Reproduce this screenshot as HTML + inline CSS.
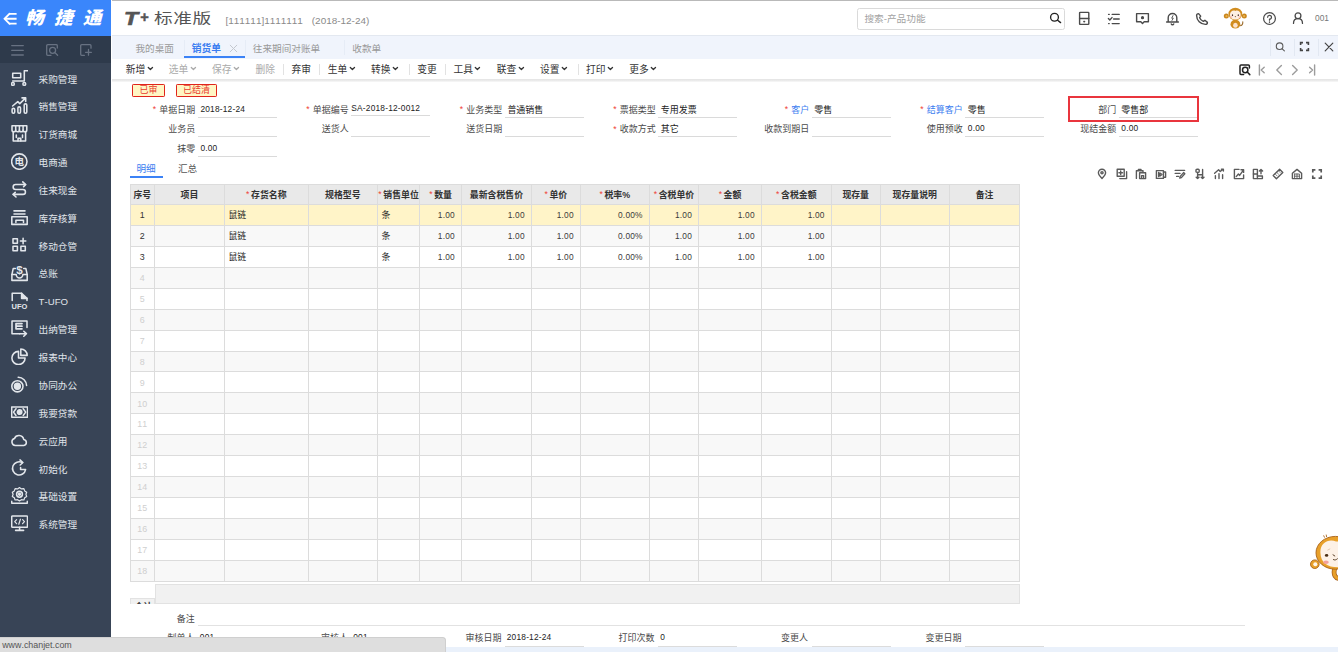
<!DOCTYPE html>
<html lang="zh-CN"><head><meta charset="utf-8"><title>T+ 标准版 - 销货单</title>
<style>
html,body{margin:0;padding:0;}
body{width:1338px;height:652px;overflow:hidden;position:relative;background:#fff;font-family:"Liberation Sans","Noto Sans CJK SC",sans-serif;}
.t{position:absolute;white-space:nowrap;font-kerning:none;}
.b{position:absolute;box-sizing:border-box;}
.r{color:#f04134;}
svg text{stroke:none;font-family:"Liberation Sans","Noto Sans CJK SC",sans-serif;}
</style></head><body>
<div class="b" style="left:0.00px;top:0.00px;width:111.00px;height:652.00px;background:#384456;"></div>
<div class="b" style="left:0.00px;top:0.00px;width:111.00px;height:36.00px;background:#3a86fb;"></div>
<div class="b" style="left:0.00px;top:36.00px;width:111.00px;height:26.80px;background:#2e3a4b;"></div>
<svg class="b" style="left:2.50px;top:11.50px;" width="15" height="14" viewBox="0 0 15 14" fill="none" stroke="#fff" stroke-width="1.9" stroke-linecap="round" stroke-linejoin="round"><path d="M6.3 1.9 H13.6 M1.9 6.8 H13.6 M6.3 11.6 H13.6" stroke-linecap="butt"/><path d="M6.6 1.7 L1.6 6.8 L6.6 11.8" stroke-linejoin="miter"/></svg>
<span class="t " style="left:24.80px;top:5.80px;font-size:17.60px;line-height:24px;color:#fff;font-weight:900;font-style:italic;letter-spacing:2.4px;transform:scaleX(1.06);transform-origin:0 50%;">畅 捷 通</span>
<svg class="b" style="left:11.00px;top:44.00px;" width="13" height="13" viewBox="0 0 13 13" fill="none" stroke="#687282" stroke-width="1.3" stroke-linecap="round" stroke-linejoin="round"><path d="M0.7 1.6 H12.3 M0.7 6.3 H12.3 M0.7 11 H12.3"/></svg>
<svg class="b" style="left:45.50px;top:44.00px;" width="13" height="13" viewBox="0 0 13 13" fill="none" stroke="#687282" stroke-width="1.3" stroke-linecap="round" stroke-linejoin="round"><path d="M11.3 4 V1.6 A1 1 0 0 0 10.3 0.7 H1.7 A1 1 0 0 0 0.7 1.7 V10.3 A1 1 0 0 0 1.7 11.3 H5"/><circle cx="6.6" cy="6.3" r="3"/><path d="M8.9 8.6 L11.6 11.3"/></svg>
<svg class="b" style="left:79.50px;top:44.00px;" width="13" height="13" viewBox="0 0 13 13" fill="none" stroke="#687282" stroke-width="1.3" stroke-linecap="round" stroke-linejoin="round"><path d="M11 4.2 V1.7 A1 1 0 0 0 10 0.7 H1.7 A1 1 0 0 0 0.7 1.7 V10.3 A1 1 0 0 0 1.7 11.3 H4.4"/><path d="M8.5 5.4 V11.2 M5.6 8.3 H11.4"/></svg>
<svg class="b" style="left:10.90px;top:69.60px;" width="17" height="17.4" viewBox="0 0 17 17.4" fill="none" stroke="#e2e6eb" stroke-width="1.55" stroke-linecap="round" stroke-linejoin="round"><path d="M16.6 0.8 H13.3 V11 H1.7"/><rect x="1.7" y="3.3" width="8" height="4.4"/><circle cx="1.9" cy="13.9" r="1.4"/><circle cx="13.3" cy="13.9" r="1.4"/></svg>
<span class="t " style="left:38.60px;top:72.70px;font-size:9.65px;line-height:14px;color:#e0e4ea;">采购管理</span>
<svg class="b" style="left:10.90px;top:97.20px;" width="17" height="17.4" viewBox="0 0 17 17.4" fill="none" stroke="#e2e6eb" stroke-width="1.55" stroke-linecap="round" stroke-linejoin="round"><rect x="1.1" y="11.4" width="2.6" height="4.8" rx="1.2"/><rect x="6.9" y="9.9" width="2.6" height="6.3" rx="1.2"/><rect x="13.2" y="6.9" width="2.6" height="9.3" rx="1.2"/><path d="M1.6 9 L6.8 4.6 L8.8 6.6 L14.4 1.1 M11 0.9 H14.7 V4.6"/></svg>
<span class="t " style="left:38.60px;top:100.30px;font-size:9.65px;line-height:14px;color:#e0e4ea;">销售管理</span>
<svg class="b" style="left:10.90px;top:125.00px;" width="17" height="17.4" viewBox="0 0 17 17.4" fill="none" stroke="#e2e6eb" stroke-width="1.55" stroke-linecap="round" stroke-linejoin="round"><path d="M1 0.8 H15.8 V5 A1.85 1.85 0 0 1 12.1 5 A1.85 1.85 0 0 1 8.4 5 A1.85 1.85 0 0 1 4.7 5 A1.85 1.85 0 0 1 1 5 Z"/><path d="M4.7 0.8 V5 M8.4 0.8 V5 M12.1 0.8 V5"/><path d="M2.2 7.2 V16 H14.6 V7.2"/><path d="M5.3 10 V12.6 M11.5 10 V12.6 M7 16 V13.4 H9.8 V16"/></svg>
<span class="t " style="left:38.60px;top:128.10px;font-size:9.65px;line-height:14px;color:#e0e4ea;">订货商城</span>
<svg class="b" style="left:10.90px;top:152.80px;" width="17" height="17.4" viewBox="0 0 17 17.4" fill="none" stroke="#e2e6eb" stroke-width="1.55" stroke-linecap="round" stroke-linejoin="round"><circle cx="8.3" cy="8.6" r="7.7"/><text x="8.3" y="12.2" font-size="9.6" font-weight="700" text-anchor="middle" fill="#e2e6eb">电</text></svg>
<span class="t " style="left:38.60px;top:155.90px;font-size:9.65px;line-height:14px;color:#e0e4ea;">电商通</span>
<svg class="b" style="left:10.90px;top:180.80px;" width="17" height="17.4" viewBox="0 0 17 17.4" fill="none" stroke="#e2e6eb" stroke-width="1.55" stroke-linecap="round" stroke-linejoin="round"><path d="M14.6 3.6 H4.6 A2.45 2.45 0 0 0 4.6 8.5 H12 A2.45 2.45 0 0 1 12 13.4 H2.2"/><path d="M11.8 0.9 L14.6 3.6 L12.6 5.6 M5 16 L2.2 13.4 L4.2 11.4"/></svg>
<span class="t " style="left:38.60px;top:183.90px;font-size:9.65px;line-height:14px;color:#e0e4ea;">往来现金</span>
<svg class="b" style="left:10.90px;top:208.60px;" width="17" height="17.4" viewBox="0 0 17 17.4" fill="none" stroke="#e2e6eb" stroke-width="1.55" stroke-linecap="round" stroke-linejoin="round"><path d="M3 1.9 H14 M3 5 H14"/><rect x="0.8" y="7.7" width="15.4" height="7.7"/><path d="M4.9 13.4 V11.2 H12.5 V13.4"/></svg>
<span class="t " style="left:38.60px;top:211.70px;font-size:9.65px;line-height:14px;color:#e0e4ea;">库存核算</span>
<svg class="b" style="left:10.90px;top:236.40px;" width="17" height="17.4" viewBox="0 0 17 17.4" fill="none" stroke="#e2e6eb" stroke-width="1.55" stroke-linecap="round" stroke-linejoin="round"><rect x="2" y="2.7" width="4.4" height="4.6"/><rect x="2" y="10.2" width="4.4" height="4.6"/><rect x="9.9" y="10.2" width="4.4" height="4.6"/><path d="M12.1 2.3 V7.7 M9.4 5 H14.8"/></svg>
<span class="t " style="left:38.60px;top:239.50px;font-size:9.65px;line-height:14px;color:#e0e4ea;">移动仓管</span>
<svg class="b" style="left:10.90px;top:264.20px;" width="17" height="17.4" viewBox="0 0 17 17.4" fill="none" stroke="#e2e6eb" stroke-width="1.55" stroke-linecap="round" stroke-linejoin="round"><path d="M4.4 4.6 H2.2 L0.9 10.6 V16.4 H16.2 V10.6 L14.9 4.6 H12.7"/><path d="M0.9 10.6 H5.2 A3.35 3.35 0 0 0 11.9 10.6 H16.2"/><text x="8.55" y="10" font-size="11.6" font-weight="700" text-anchor="middle" fill="#e2e6eb">$</text></svg>
<span class="t " style="left:38.60px;top:267.30px;font-size:9.65px;line-height:14px;color:#e0e4ea;">总账</span>
<svg class="b" style="left:10.90px;top:292.00px;" width="17" height="17.4" viewBox="0 0 17 17.4" fill="none" stroke="#e2e6eb" stroke-width="1.55" stroke-linecap="round" stroke-linejoin="round"><path d="M1.2 8.6 V1.3 H10.6 L16 6.4 V8.6"/><path d="M10.6 1.3 V6.4 H16" fill="#e2e6eb"/><text x="0.6" y="16.9" font-size="8" font-weight="700" fill="#e2e6eb" textLength="15.8" lengthAdjust="spacingAndGlyphs">UFO</text></svg>
<span class="t " style="left:38.60px;top:295.10px;font-size:9.65px;line-height:14px;color:#e0e4ea;">T-UFO</span>
<svg class="b" style="left:10.90px;top:319.90px;" width="17" height="17.4" viewBox="0 0 17 17.4" fill="none" stroke="#e2e6eb" stroke-width="1.55" stroke-linecap="round" stroke-linejoin="round"><path d="M8.6 13.7 H1 V1 H16 V7.6"/><path d="M5 3.6 H11 M5 6.2 H11 M5 8.8 H11 M5 3.6 V8.8" stroke-width="1.7"/><path d="M8.6 13.7 H15.2 M12.8 11.3 L15.4 13.7 L12.8 16.2"/></svg>
<span class="t " style="left:38.60px;top:323.00px;font-size:9.65px;line-height:14px;color:#e0e4ea;">出纳管理</span>
<svg class="b" style="left:10.90px;top:347.80px;" width="17" height="17.4" viewBox="0 0 17 17.4" fill="none" stroke="#e2e6eb" stroke-width="1.55" stroke-linecap="round" stroke-linejoin="round"><path d="M7.5 3.4 A6.6 6.6 0 1 0 14.1 10 H7.5 Z"/><path d="M9.8 1 A6.4 6.4 0 0 1 16.2 7.4 H9.8 Z"/></svg>
<span class="t " style="left:38.60px;top:350.90px;font-size:9.65px;line-height:14px;color:#e0e4ea;">报表中心</span>
<svg class="b" style="left:10.90px;top:375.70px;" width="17" height="17.4" viewBox="0 0 17 17.4" fill="none" stroke="#e2e6eb" stroke-width="1.55" stroke-linecap="round" stroke-linejoin="round"><circle cx="6.4" cy="10.3" r="5.6"/><circle cx="6.4" cy="10.3" r="2.9" fill="#e2e6eb"/><path d="M7.2 1.2 A8.6 8.6 0 0 1 15.6 9.6"/></svg>
<span class="t " style="left:38.60px;top:378.80px;font-size:9.65px;line-height:14px;color:#e0e4ea;">协同办公</span>
<svg class="b" style="left:10.90px;top:403.60px;" width="17" height="17.4" viewBox="0 0 17 17.4" fill="none" stroke="#e2e6eb" stroke-width="1.55" stroke-linecap="round" stroke-linejoin="round"><rect x="0.7" y="2.9" width="15.8" height="10.4" stroke-width="1.5"/><path d="M5 4.7 L2.5 8.1 L5 11.5 M12.2 4.7 L14.7 8.1 L12.2 11.5"/><circle cx="8.6" cy="8.1" r="2.2" fill="#e2e6eb"/></svg>
<span class="t " style="left:38.60px;top:406.70px;font-size:9.65px;line-height:14px;color:#e0e4ea;">我要贷款</span>
<svg class="b" style="left:10.90px;top:431.50px;" width="17" height="17.4" viewBox="0 0 17 17.4" fill="none" stroke="#e2e6eb" stroke-width="1.55" stroke-linecap="round" stroke-linejoin="round"><path d="M4.3 13.6 A3.6 3.6 0 0 1 3.4 6.6 A4.9 4.9 0 0 1 12.7 7.4 A3.15 3.15 0 0 1 12.8 13.6 Z"/></svg>
<span class="t " style="left:38.60px;top:434.60px;font-size:9.65px;line-height:14px;color:#e0e4ea;">云应用</span>
<svg class="b" style="left:10.90px;top:459.40px;" width="17" height="17.4" viewBox="0 0 17 17.4" fill="none" stroke="#e2e6eb" stroke-width="1.55" stroke-linecap="round" stroke-linejoin="round"><path d="M11.3 3.6 A6.6 6.6 0 1 0 14.6 10.6 H9.6 V8.6"/><path d="M9 0.9 L11.9 3.5 L9.2 6"/></svg>
<span class="t " style="left:38.60px;top:462.50px;font-size:9.65px;line-height:14px;color:#e0e4ea;">初始化</span>
<svg class="b" style="left:10.90px;top:487.30px;" width="17" height="17.4" viewBox="0 0 17 17.4" fill="none" stroke="#e2e6eb" stroke-width="1.55" stroke-linecap="round" stroke-linejoin="round"><path d="M8.5 0.6 L10.4 1.9 L12.9 1.6 L13.7 3.9 L15.7 5.2 L14.9 7.3 L15.7 9.4 L13.7 10.7 L12.9 13 L10.4 12.7 L8.5 14 L6.6 12.7 L4.1 13 L3.3 10.7 L1.3 9.4 L2.1 7.3 L1.3 5.2 L3.3 3.9 L4.1 1.6 L6.6 1.9 Z" stroke-width="1.2"/><circle cx="8.5" cy="7.3" r="2.9"/><circle cx="8.5" cy="7.3" r="0.9" fill="#e2e6eb"/><path d="M0.7 14.3 V16.2 H16.3 V14.3"/></svg>
<span class="t " style="left:38.60px;top:490.40px;font-size:9.65px;line-height:14px;color:#e0e4ea;">基础设置</span>
<svg class="b" style="left:10.90px;top:515.20px;" width="17" height="17.4" viewBox="0 0 17 17.4" fill="none" stroke="#e2e6eb" stroke-width="1.55" stroke-linecap="round" stroke-linejoin="round"><rect x="0.7" y="1" width="15.8" height="11.3" rx="0.8"/><path d="M8.6 12.3 V15.2 M4.6 15.4 H12.6"/><path d="M5.6 4.7 L3.7 6.7 L5.6 8.7 M11.6 4.7 L13.5 6.7 L11.6 8.7 M9.4 4.2 L7.8 9.2" stroke-width="1.2"/></svg>
<span class="t " style="left:38.60px;top:518.30px;font-size:9.65px;line-height:14px;color:#e0e4ea;">系统管理</span>
<div class="b" style="left:111.60px;top:0.00px;width:1226.40px;height:1.00px;background:#b9b9b9;"></div>
<div class="b" style="left:111.60px;top:34.60px;width:1226.40px;height:1.00px;background:#e3e8f0;"></div>
<span class="t " style="left:123.80px;top:6.70px;font-size:19.20px;line-height:24px;color:#555;font-weight:700;font-style:italic;transform:scaleX(1.2);transform-origin:0 50%;-webkit-text-stroke:0.7px #555;">T</span>
<span class="t " style="left:140.00px;top:10.00px;font-size:14.50px;line-height:14px;color:#555;font-weight:700;font-style:italic;-webkit-text-stroke:0.5px #555;">+</span>
<span class="t " style="left:153.60px;top:7.10px;font-size:13.70px;line-height:24px;color:#555;font-weight:400;letter-spacing:0.4px;transform:scaleX(1.365);transform-origin:0 50%;">标准版</span>
<span class="t " style="left:225.50px;top:14.20px;font-size:9.95px;line-height:14px;color:#8a8a8a;">[111111]1111111</span>
<span class="t " style="left:311.80px;top:14.20px;font-size:9.95px;line-height:14px;color:#8a8a8a;">(2018-12-24)</span>
<div class="b" style="left:856.60px;top:7.50px;width:208.90px;height:22.20px;border:1px solid #dadada;border-radius:2.5px;background:#fff;"></div>
<span class="t " style="left:864.40px;top:12.40px;font-size:9.66px;line-height:14px;color:#a2a2a2;">搜索-产品功能</span>
<svg class="b" style="left:1048.00px;top:11.00px;" width="16" height="14" viewBox="0 0 16 14" fill="none" stroke="#222" stroke-width="1.35" stroke-linecap="round" stroke-linejoin="round"><circle cx="6.5" cy="6.2" r="3.9"/><path d="M9.6 9.2 L12.6 11.6"/></svg>
<svg class="b" style="left:1077.80px;top:11.30px;" width="13" height="15" viewBox="0 0 13 15" fill="none" stroke="#4a4a4a" stroke-width="1.4" stroke-linecap="round" stroke-linejoin="round"><rect x="1.6" y="1.4" width="9.2" height="12" rx="0.6"/><path d="M1.6 7.5 H10.8"/><path d="M5.9 10.6 H6.5" stroke-width="1.6"/></svg>
<svg class="b" style="left:1106.50px;top:12.00px;" width="14" height="14" viewBox="0 0 14 14" fill="none" stroke="#4a4a4a" stroke-width="1.4" stroke-linecap="round" stroke-linejoin="round"><path d="M5.2 2.4 H12.2 M6.6 7 H12.2 M5.2 11.6 H12.2 M1.6 2.4 H2.2 M1.6 11.6 H2.2"/><path d="M1.4 6.6 L2.8 8 L5 5.6"/></svg>
<svg class="b" style="left:1135.00px;top:12.00px;" width="15" height="14" viewBox="0 0 15 14" fill="none" stroke="#4a4a4a" stroke-width="1.4" stroke-linecap="round" stroke-linejoin="round"><path d="M1.6 1.6 H13.4 V9.8 H9.2 L7.5 11.6 L5.8 9.8 H1.6 Z"/><circle cx="7.5" cy="5.7" r="0.9" fill="#4a4a4a"/></svg>
<svg class="b" style="left:1164.50px;top:10.70px;" width="15" height="15" viewBox="0 0 15 15" fill="none" stroke="#4a4a4a" stroke-width="1.4" stroke-linecap="round" stroke-linejoin="round"><path d="M1.6 11 H13.4 M3.2 11 V6.8 A4.3 4.3 0 0 1 11.8 6.8 V11 M6.3 13 A1.3 1.3 0 0 0 8.7 13"/><path d="M8 4.6 L6.7 7.2 H8.3 L7 9.4" stroke-width="0.9"/></svg>
<svg class="b" style="left:1194.50px;top:12.00px;" width="14" height="14" viewBox="0 0 14 14" fill="none" stroke="#4a4a4a" stroke-width="1.4" stroke-linecap="round" stroke-linejoin="round"><path d="M3.6 1.6 C2.6 1.6 1.6 2.6 1.6 3.6 C1.6 8.4 5.6 12.4 10.4 12.4 C11.4 12.4 12.4 11.4 12.4 10.4 L9.9 8.3 L8.3 9.4 C6.7 8.7 5.3 7.3 4.6 5.7 L5.7 4.1 Z"/></svg>
<svg class="b" style="left:1223px;top:7px" width="25" height="22" viewBox="0 0 25 22"><path d="M17.6 18.6 C19.4 18.4 19.9 16.6 19.8 14.8" fill="none" stroke="#9a6a2a" stroke-width="1.1" stroke-linecap="round"/><ellipse cx="12.4" cy="17.2" rx="4.9" ry="4.4" fill="#d18d20"/><ellipse cx="12.4" cy="18.2" rx="2.3" ry="2.5" fill="#fde3cc"/><circle cx="3.3" cy="9.1" r="2.5" fill="#c9861d"/><circle cx="21.3" cy="9.1" r="2.5" fill="#c9861d"/><circle cx="3.5" cy="9.2" r="1.1" fill="#e9b04a"/><circle cx="21.1" cy="9.2" r="1.1" fill="#e9b04a"/><ellipse cx="12.35" cy="7" rx="6.9" ry="6.2" fill="#d18d20"/><path d="M12.35 3.9 C9.8 2.9 6.9 4.6 7 8 C7.1 11.4 9.6 12.6 12.35 12.6 C15.1 12.6 17.6 11.4 17.7 8 C17.8 4.6 14.9 2.9 12.35 3.9 Z" fill="#fdf0e3"/><ellipse cx="9.5" cy="8.2" rx="0.65" ry="0.85" fill="#4a2f2a"/><ellipse cx="15.3" cy="8.2" rx="0.65" ry="0.85" fill="#4a2f2a"/><ellipse cx="8.2" cy="10" rx="1.2" ry="0.8" fill="#f8b8b0"/><ellipse cx="16.6" cy="10" rx="1.2" ry="0.8" fill="#f8b8b0"/><ellipse cx="12.4" cy="9.6" rx="0.7" ry="0.6" fill="#8a6a55"/></svg>
<svg class="b" style="left:1262.00px;top:11.10px;" width="15" height="15" viewBox="0 0 15 15" fill="none" stroke="#4a4a4a" stroke-width="1.25" stroke-linecap="round" stroke-linejoin="round"><circle cx="7.5" cy="7.5" r="5.9"/><path d="M5.6 6.2 A1.95 1.95 0 1 1 7.5 8.2 V9.2"/><path d="M7.5 11 V11.2" stroke-width="1.4"/></svg>
<svg class="b" style="left:1291.30px;top:11.20px;" width="14" height="15" viewBox="0 0 14 15" fill="none" stroke="#4a4a4a" stroke-width="1.3" stroke-linecap="round" stroke-linejoin="round"><circle cx="7" cy="4.7" r="2.9"/><path d="M2.5 12.4 C2.5 9.3 4.4 7.7 7 7.7 C9.6 7.7 11.5 9.3 11.5 12.4"/></svg>
<span class="t " style="left:1315.00px;top:10.80px;font-size:8.40px;line-height:14px;color:#777;">001</span>
<div class="b" style="left:111.60px;top:35.60px;width:1226.40px;height:23.00px;background:#f0f4fc;"></div>
<span class="t " style="left:135.40px;top:42.10px;font-size:9.65px;line-height:14px;color:#999;">我的桌面</span>
<span class="t " style="left:191.80px;top:42.10px;font-size:9.75px;line-height:14px;color:#3b7df0;font-weight:700;">销货单</span>
<svg class="b" style="left:228.50px;top:43.80px;" width="9" height="9" viewBox="0 0 9 9" fill="none" stroke="#c4c8cf" stroke-width="1" stroke-linecap="round" stroke-linejoin="round"><path d="M1.2 1.2 L7.8 7.8 M7.8 1.2 L1.2 7.8"/></svg>
<div class="b" style="left:184.20px;top:55.50px;width:60.50px;height:2.00px;background:#3b82f6;"></div>
<div class="b" style="left:184.00px;top:39.50px;width:1.00px;height:15.00px;background:#e6ecf6;"></div>
<div class="b" style="left:244.60px;top:39.50px;width:1.00px;height:15.00px;background:#e6ecf6;"></div>
<div class="b" style="left:344.00px;top:39.50px;width:1.00px;height:15.00px;background:#e6ecf6;"></div>
<span class="t " style="left:252.80px;top:42.10px;font-size:9.65px;line-height:14px;color:#999;">往来期间对账单</span>
<span class="t " style="left:352.30px;top:42.10px;font-size:9.65px;line-height:14px;color:#999;">收款单</span>
<div class="b" style="left:1269.50px;top:39.00px;width:1.00px;height:17.00px;background:#e2e8f2;"></div>
<div class="b" style="left:1293.50px;top:39.00px;width:1.00px;height:17.00px;background:#e2e8f2;"></div>
<div class="b" style="left:1317.60px;top:39.00px;width:1.00px;height:17.00px;background:#e2e8f2;"></div>
<svg class="b" style="left:1273.50px;top:41.00px;" width="12" height="12" viewBox="0 0 12 12" fill="none" stroke="#5a5a5a" stroke-width="1.1" stroke-linecap="round" stroke-linejoin="round"><circle cx="5.6" cy="5.2" r="3.3"/><path d="M8.2 7.8 L10.4 9.8"/></svg>
<svg class="b" style="left:1299.00px;top:41.30px;" width="11" height="11" viewBox="0 0 11 11" fill="none" stroke="#444" stroke-width="1.6" stroke-linecap="round" stroke-linejoin="round"><path d="M1.6 4 V1.6 H4 M7 1.6 H9.4 V4 M9.4 7 V9.4 H7 M4 9.4 H1.6 V7" stroke-linecap="butt" stroke-linejoin="miter"/></svg>
<svg class="b" style="left:1324.00px;top:41.80px;" width="10" height="10" viewBox="0 0 10 10" fill="none" stroke="#444" stroke-width="1.2" stroke-linecap="round" stroke-linejoin="round"><path d="M1.2 1.2 L8.8 8.8 M8.8 1.2 L1.2 8.8"/></svg>
<div class="b" style="left:111.60px;top:78.80px;width:1226.40px;height:2.80px;background:linear-gradient(#e4e4e4,#ececec 60%,#fafafa);"></div>
<span class="t " style="left:125.80px;top:62.70px;font-size:9.75px;line-height:14px;color:#333;">新增</span>
<svg class="b" style="left:146.80px;top:66.30px;" width="7" height="6" viewBox="0 0 7 6" fill="none" stroke="#333" stroke-width="1.3" stroke-linecap="round" stroke-linejoin="round"><path d="M1.3 1.5 L3.4 3.5 L5.5 1.5"/></svg>
<span class="t " style="left:168.70px;top:62.70px;font-size:9.75px;line-height:14px;color:#aaa;">选单</span>
<svg class="b" style="left:189.70px;top:66.30px;" width="7" height="6" viewBox="0 0 7 6" fill="none" stroke="#aaa" stroke-width="1.3" stroke-linecap="round" stroke-linejoin="round"><path d="M1.3 1.5 L3.4 3.5 L5.5 1.5"/></svg>
<span class="t " style="left:212.00px;top:62.70px;font-size:9.75px;line-height:14px;color:#aaa;">保存</span>
<svg class="b" style="left:233.00px;top:66.30px;" width="7" height="6" viewBox="0 0 7 6" fill="none" stroke="#aaa" stroke-width="1.3" stroke-linecap="round" stroke-linejoin="round"><path d="M1.3 1.5 L3.4 3.5 L5.5 1.5"/></svg>
<span class="t " style="left:255.40px;top:62.70px;font-size:9.75px;line-height:14px;color:#aaa;">删除</span>
<span class="t " style="left:291.40px;top:62.70px;font-size:9.75px;line-height:14px;color:#333;">弃审</span>
<span class="t " style="left:327.70px;top:62.70px;font-size:9.75px;line-height:14px;color:#333;">生单</span>
<svg class="b" style="left:348.70px;top:66.30px;" width="7" height="6" viewBox="0 0 7 6" fill="none" stroke="#333" stroke-width="1.3" stroke-linecap="round" stroke-linejoin="round"><path d="M1.3 1.5 L3.4 3.5 L5.5 1.5"/></svg>
<span class="t " style="left:371.00px;top:62.70px;font-size:9.75px;line-height:14px;color:#333;">转换</span>
<svg class="b" style="left:392.00px;top:66.30px;" width="7" height="6" viewBox="0 0 7 6" fill="none" stroke="#333" stroke-width="1.3" stroke-linecap="round" stroke-linejoin="round"><path d="M1.3 1.5 L3.4 3.5 L5.5 1.5"/></svg>
<span class="t " style="left:417.30px;top:62.70px;font-size:9.75px;line-height:14px;color:#333;">变更</span>
<span class="t " style="left:453.40px;top:62.70px;font-size:9.75px;line-height:14px;color:#333;">工具</span>
<svg class="b" style="left:474.40px;top:66.30px;" width="7" height="6" viewBox="0 0 7 6" fill="none" stroke="#333" stroke-width="1.3" stroke-linecap="round" stroke-linejoin="round"><path d="M1.3 1.5 L3.4 3.5 L5.5 1.5"/></svg>
<span class="t " style="left:496.80px;top:62.70px;font-size:9.75px;line-height:14px;color:#333;">联查</span>
<svg class="b" style="left:517.80px;top:66.30px;" width="7" height="6" viewBox="0 0 7 6" fill="none" stroke="#333" stroke-width="1.3" stroke-linecap="round" stroke-linejoin="round"><path d="M1.3 1.5 L3.4 3.5 L5.5 1.5"/></svg>
<span class="t " style="left:540.10px;top:62.70px;font-size:9.75px;line-height:14px;color:#333;">设置</span>
<svg class="b" style="left:561.10px;top:66.30px;" width="7" height="6" viewBox="0 0 7 6" fill="none" stroke="#333" stroke-width="1.3" stroke-linecap="round" stroke-linejoin="round"><path d="M1.3 1.5 L3.4 3.5 L5.5 1.5"/></svg>
<span class="t " style="left:586.10px;top:62.70px;font-size:9.75px;line-height:14px;color:#333;">打印</span>
<svg class="b" style="left:607.10px;top:66.30px;" width="7" height="6" viewBox="0 0 7 6" fill="none" stroke="#333" stroke-width="1.3" stroke-linecap="round" stroke-linejoin="round"><path d="M1.3 1.5 L3.4 3.5 L5.5 1.5"/></svg>
<span class="t " style="left:629.20px;top:62.70px;font-size:9.75px;line-height:14px;color:#333;">更多</span>
<svg class="b" style="left:650.20px;top:66.30px;" width="7" height="6" viewBox="0 0 7 6" fill="none" stroke="#333" stroke-width="1.3" stroke-linecap="round" stroke-linejoin="round"><path d="M1.3 1.5 L3.4 3.5 L5.5 1.5"/></svg>
<div class="b" style="left:283.40px;top:64.00px;width:1.00px;height:10.50px;background:#e2e2e2;"></div>
<div class="b" style="left:319.40px;top:64.00px;width:1.00px;height:10.50px;background:#e2e2e2;"></div>
<div class="b" style="left:408.60px;top:64.00px;width:1.00px;height:10.50px;background:#e2e2e2;"></div>
<div class="b" style="left:444.80px;top:64.00px;width:1.00px;height:10.50px;background:#e2e2e2;"></div>
<div class="b" style="left:577.60px;top:64.00px;width:1.00px;height:10.50px;background:#e2e2e2;"></div>
<svg class="b" style="left:1238.50px;top:63.50px;" width="12" height="12" viewBox="0 0 12 12" fill="none" stroke="#222" stroke-width="1.5" stroke-linecap="round" stroke-linejoin="round"><path d="M10.4 4 V2 A1 1 0 0 0 9.4 1 H2 A1 1 0 0 0 1 2 V9.4 A1 1 0 0 0 2 10.4 H4.6"/><circle cx="6.2" cy="6" r="2.7"/><path d="M8.2 8 L10.8 10.6"/></svg>
<svg class="b" style="left:1256.50px;top:63.50px;" width="10" height="12" viewBox="0 0 10 12" fill="none" stroke="#9c9c9c" stroke-width="1.4" stroke-linecap="round" stroke-linejoin="round"><path d="M2.4 1 V11"/><path d="M7.2 3.2 L4.2 6 L7.2 8.8"/></svg>
<svg class="b" style="left:1273.50px;top:63.50px;" width="10" height="12" viewBox="0 0 10 12" fill="none" stroke="#9c9c9c" stroke-width="1.4" stroke-linecap="round" stroke-linejoin="round"><path d="M7.4 1.6 L2.8 6 L7.4 10.4"/></svg>
<svg class="b" style="left:1289.50px;top:63.50px;" width="10" height="12" viewBox="0 0 10 12" fill="none" stroke="#9c9c9c" stroke-width="1.4" stroke-linecap="round" stroke-linejoin="round"><path d="M2.6 1.6 L7.2 6 L2.6 10.4"/></svg>
<svg class="b" style="left:1306.50px;top:63.50px;" width="10" height="12" viewBox="0 0 10 12" fill="none" stroke="#9c9c9c" stroke-width="1.4" stroke-linecap="round" stroke-linejoin="round"><path d="M7.6 1 V11"/><path d="M2.6 3.2 L5.6 6 L2.6 8.8"/></svg>
<div class="b" style="left:131.80px;top:83.90px;width:33.40px;height:13.60px;border:1.4px solid #e0241b;background:#fff6c4;border-radius:1.2px;"></div>
<span class="t" style="left:131.80px;top:83.9px;width:33.40px;text-align:center;font-size:9.0px;line-height:13.6px;color:#e8392e;">已审</span>
<div class="b" style="left:175.80px;top:83.90px;width:41.60px;height:13.60px;border:1.4px solid #e0241b;background:#fff6c4;border-radius:1.2px;"></div>
<span class="t" style="left:175.80px;top:83.9px;width:41.60px;text-align:center;font-size:9.0px;line-height:13.6px;color:#e8392e;">已结清</span>
<span class="t " style="right:1142.80px;top:102.50px;font-size:8.97px;line-height:14px;color:#4a4a4a;"><span class="r" style="font-size:8.6px;line-height:8px;position:relative;top:-0.4px;margin-right:3.2px;">*</span>单据日期</span>
<span class="t " style="left:200.40px;top:101.60px;font-size:8.35px;line-height:14px;color:#222;letter-spacing:0.2px;">2018-12-24</span>
<div class="b" style="left:197.80px;top:116.60px;width:79.20px;height:1.00px;background:#dadada;"></div>
<span class="t " style="right:989.31px;top:102.50px;font-size:8.97px;line-height:14px;color:#4a4a4a;"><span class="r" style="font-size:8.6px;line-height:8px;position:relative;top:-0.4px;margin-right:3.2px;">*</span>单据编号</span>
<span class="t " style="left:351.29px;top:100.50px;font-size:8.35px;line-height:14px;color:#222;letter-spacing:0.2px;">SA-2018-12-0012</span>
<div class="b" style="left:351.29px;top:115.10px;width:79.20px;height:1.00px;background:#dadada;"></div>
<span class="t " style="right:835.82px;top:102.50px;font-size:8.97px;line-height:14px;color:#4a4a4a;"><span class="r" style="font-size:8.6px;line-height:8px;position:relative;top:-0.4px;margin-right:3.2px;">*</span>业务类型</span>
<span class="t " style="left:507.38px;top:102.60px;font-size:8.97px;line-height:14px;color:#222;">普通销售</span>
<div class="b" style="left:504.78px;top:116.60px;width:79.20px;height:1.00px;background:#dadada;"></div>
<span class="t " style="right:682.33px;top:102.50px;font-size:8.97px;line-height:14px;color:#4a4a4a;"><span class="r" style="font-size:8.6px;line-height:8px;position:relative;top:-0.4px;margin-right:3.2px;">*</span>票据类型</span>
<span class="t " style="left:660.87px;top:102.60px;font-size:8.97px;line-height:14px;color:#222;">专用发票</span>
<div class="b" style="left:658.27px;top:116.60px;width:79.20px;height:1.00px;background:#dadada;"></div>
<span class="t " style="right:528.84px;top:102.50px;font-size:8.97px;line-height:14px;color:#3b7df0;"><span class="r" style="font-size:8.6px;line-height:8px;position:relative;top:-0.4px;margin-right:3.2px;">*</span>客户</span>
<span class="t " style="left:814.36px;top:102.60px;font-size:8.97px;line-height:14px;color:#222;">零售</span>
<div class="b" style="left:811.76px;top:116.60px;width:79.20px;height:1.00px;background:#dadada;"></div>
<span class="t " style="right:375.35px;top:102.50px;font-size:8.97px;line-height:14px;color:#3b7df0;"><span class="r" style="font-size:8.6px;line-height:8px;position:relative;top:-0.4px;margin-right:3.2px;">*</span>结算客户</span>
<span class="t " style="left:967.85px;top:102.60px;font-size:8.97px;line-height:14px;color:#222;">零售</span>
<div class="b" style="left:965.25px;top:116.60px;width:79.20px;height:1.00px;background:#dadada;"></div>
<span class="t " style="right:221.86px;top:102.50px;font-size:8.97px;line-height:14px;color:#4a4a4a;">部门</span>
<span class="t " style="left:1121.34px;top:102.60px;font-size:8.97px;line-height:14px;color:#222;">零售部</span>
<div class="b" style="left:1118.74px;top:116.60px;width:79.20px;height:1.00px;background:#dadada;"></div>
<span class="t " style="right:1142.80px;top:122.30px;font-size:8.97px;line-height:14px;color:#4a4a4a;">业务员</span>
<div class="b" style="left:197.80px;top:136.40px;width:79.20px;height:1.00px;background:#dadada;"></div>
<span class="t " style="right:989.31px;top:122.30px;font-size:8.97px;line-height:14px;color:#4a4a4a;">送货人</span>
<div class="b" style="left:351.29px;top:136.40px;width:79.20px;height:1.00px;background:#dadada;"></div>
<span class="t " style="right:835.82px;top:122.30px;font-size:8.97px;line-height:14px;color:#4a4a4a;">送货日期</span>
<div class="b" style="left:504.78px;top:136.40px;width:79.20px;height:1.00px;background:#dadada;"></div>
<span class="t " style="right:682.33px;top:122.30px;font-size:8.97px;line-height:14px;color:#4a4a4a;"><span class="r" style="font-size:8.6px;line-height:8px;position:relative;top:-0.4px;margin-right:3.2px;">*</span>收款方式</span>
<span class="t " style="left:660.87px;top:122.40px;font-size:8.97px;line-height:14px;color:#222;">其它</span>
<div class="b" style="left:658.27px;top:136.40px;width:79.20px;height:1.00px;background:#dadada;"></div>
<span class="t " style="right:528.84px;top:122.30px;font-size:8.97px;line-height:14px;color:#4a4a4a;">收款到期日</span>
<div class="b" style="left:811.76px;top:136.40px;width:79.20px;height:1.00px;background:#dadada;"></div>
<span class="t " style="right:375.35px;top:122.30px;font-size:8.97px;line-height:14px;color:#4a4a4a;">使用预收</span>
<span class="t " style="left:967.85px;top:121.40px;font-size:8.35px;line-height:14px;color:#222;letter-spacing:0.2px;">0.00</span>
<div class="b" style="left:965.25px;top:136.40px;width:79.20px;height:1.00px;background:#dadada;"></div>
<span class="t " style="right:221.86px;top:122.30px;font-size:8.97px;line-height:14px;color:#4a4a4a;">现结金额</span>
<span class="t " style="left:1121.34px;top:121.40px;font-size:8.35px;line-height:14px;color:#222;letter-spacing:0.2px;">0.00</span>
<div class="b" style="left:1118.74px;top:136.40px;width:79.20px;height:1.00px;background:#dadada;"></div>
<span class="t " style="right:1142.80px;top:141.80px;font-size:8.97px;line-height:14px;color:#4a4a4a;">抹零</span>
<span class="t " style="left:200.40px;top:140.90px;font-size:8.35px;line-height:14px;color:#222;letter-spacing:0.2px;">0.00</span>
<div class="b" style="left:197.80px;top:155.90px;width:79.20px;height:1.00px;background:#dadada;"></div>
<div class="b" style="left:1068.00px;top:96.00px;width:131.00px;height:26.00px;border:2px solid #e9353d;"></div>
<span class="t " style="left:136.40px;top:161.80px;font-size:9.65px;line-height:14px;color:#3b7df0;">明细</span>
<span class="t " style="left:178.00px;top:161.80px;font-size:9.65px;line-height:14px;color:#555;">汇总</span>
<div class="b" style="left:130.20px;top:176.10px;width:33.20px;height:2.00px;background:#3b82f6;"></div>
<svg class="b" style="left:1096.40px;top:167.90px;" width="12" height="12" viewBox="0 0 12 12" fill="none" stroke="#5a5a5a" stroke-width="1.4" stroke-linecap="round" stroke-linejoin="round"><path d="M6 10.6 C3.6 8 2.4 6.4 2.4 4.8 A3.6 3.6 0 0 1 9.6 4.8 C9.6 6.4 8.4 8 6 10.6 Z"/><circle cx="6" cy="4.8" r="1.1"/></svg>
<svg class="b" style="left:1115.90px;top:167.90px;" width="12" height="12" viewBox="0 0 12 12" fill="none" stroke="#5a5a5a" stroke-width="1.4" stroke-linecap="round" stroke-linejoin="round"><rect x="1.2" y="1.2" width="7" height="7"/><path d="M4.7 2.9 V6.5 M2.9 4.7 H6.5 M10.6 3.8 V10.6 H3.8"/></svg>
<svg class="b" style="left:1135.40px;top:167.90px;" width="12" height="12" viewBox="0 0 12 12" fill="none" stroke="#5a5a5a" stroke-width="1.4" stroke-linecap="round" stroke-linejoin="round"><path d="M1.4 10.4 V2.8 H8 V4.6 M3.4 2.8 V1.4 H6 V2.8"/><rect x="4.6" y="4.8" width="6" height="5.8"/><path d="M6.6 10.4 V7.6 H8.6 V10.4"/></svg>
<svg class="b" style="left:1154.90px;top:167.90px;" width="12" height="12" viewBox="0 0 12 12" fill="none" stroke="#5a5a5a" stroke-width="1.4" stroke-linecap="round" stroke-linejoin="round"><path d="M1.4 2.6 H8.4 V10.4 H1.4 Z M8.4 4 H10.6 V9.2 H8.4"/><path d="M3.6 4.4 V8.6 M5 5 L7 6.5 L5 8 Z"/></svg>
<svg class="b" style="left:1174.40px;top:167.90px;" width="12" height="12" viewBox="0 0 12 12" fill="none" stroke="#5a5a5a" stroke-width="1.4" stroke-linecap="round" stroke-linejoin="round"><path d="M1.2 2.4 H10.6 M1.2 5.4 H6 M2.6 8.4 H4.6"/><path d="M9.6 4.6 L10.8 5.8 L7.4 9.6 L5.8 10 L6.2 8.4 Z"/></svg>
<svg class="b" style="left:1193.90px;top:167.90px;" width="12" height="12" viewBox="0 0 12 12" fill="none" stroke="#5a5a5a" stroke-width="1.4" stroke-linecap="round" stroke-linejoin="round"><rect x="2" y="1.2" width="3.2" height="3.2" rx="1"/><path d="M3.6 4.4 V10.6 M3.6 6.8 H8.6 M8.6 1.4 V10.6 M7.2 9.2 L8.6 10.6 L10 9.2 M2.2 9.2 L3.6 10.6 L5 9.2"/></svg>
<svg class="b" style="left:1213.40px;top:167.90px;" width="12" height="12" viewBox="0 0 12 12" fill="none" stroke="#5a5a5a" stroke-width="1.4" stroke-linecap="round" stroke-linejoin="round"><path d="M2.4 10.6 V7.6 M6 10.6 V5.6 M9.6 10.6 V6.8"/><path d="M1.6 5.2 L5.6 1.8 L7.2 3.4 L10.2 1.2 M8.4 1.2 H10.4 V3"/></svg>
<svg class="b" style="left:1232.90px;top:167.90px;" width="12" height="12" viewBox="0 0 12 12" fill="none" stroke="#5a5a5a" stroke-width="1.4" stroke-linecap="round" stroke-linejoin="round"><path d="M6 1.4 H1.4 V10.6 H10.6 V7"/><path d="M3.2 8.6 L5.4 6 L6.6 7.4 L10.4 2.2 M8 1.8 H10.6 V4.4"/></svg>
<svg class="b" style="left:1252.40px;top:167.90px;" width="12" height="12" viewBox="0 0 12 12" fill="none" stroke="#5a5a5a" stroke-width="1.4" stroke-linecap="round" stroke-linejoin="round"><rect x="1.4" y="1.4" width="4" height="9.2"/><path d="M1.4 6 H5.4 M5.4 8 H10.4 V10.6 H5.4 M9 1.4 V5.8 M7.4 3 L9 1.4 L10.6 3"/></svg>
<svg class="b" style="left:1271.90px;top:167.90px;" width="12" height="12" viewBox="0 0 12 12" fill="none" stroke="#5a5a5a" stroke-width="1.4" stroke-linecap="round" stroke-linejoin="round"><path d="M7.6 1.2 L10.8 4.4 L4.4 10.8 L1.2 7.6 Z"/><path d="M5.4 5 L6.4 6 M7 3.4 L8 4.4 M3.8 6.6 L4.8 7.6" stroke-width="0.9"/></svg>
<svg class="b" style="left:1291.40px;top:167.90px;" width="12" height="12" viewBox="0 0 12 12" fill="none" stroke="#5a5a5a" stroke-width="1.4" stroke-linecap="round" stroke-linejoin="round"><path d="M1.4 5.2 L6 1.4 L10.6 5.2 V10.6 H1.4 Z"/><path d="M3.6 6 H8.4 V10.4 M3.6 6 V10.4 M3.6 8.2 H8.4 M6 6 V10.4" stroke-width="0.9"/></svg>
<svg class="b" style="left:1310.90px;top:167.90px;" width="12" height="12" viewBox="0 0 12 12" fill="none" stroke="#5a5a5a" stroke-width="1.4" stroke-linecap="round" stroke-linejoin="round"><path d="M1.8 4.4 V1.8 H4.4 M7.6 1.8 H10.2 V4.4 M10.2 7.6 V10.2 H7.6 M4.4 10.2 H1.8 V7.6" stroke-width="1.7" stroke-linecap="butt" stroke-linejoin="miter"/></svg>
<div class="b" style="left:130.20px;top:184.30px;width:889.40px;height:20.20px;background:#e9e9e9;"></div>
<div class="b" style="left:130.20px;top:204.50px;width:889.40px;height:20.93px;background:#fff4c8;"></div>
<div class="b" style="left:130.20px;top:225.43px;width:889.40px;height:20.93px;background:#f8f8f8;"></div>
<div class="b" style="left:130.20px;top:246.36px;width:889.40px;height:20.93px;background:#ffffff;"></div>
<div class="b" style="left:130.20px;top:267.29px;width:889.40px;height:20.93px;background:#f8f8f8;"></div>
<div class="b" style="left:130.20px;top:288.22px;width:889.40px;height:20.93px;background:#ffffff;"></div>
<div class="b" style="left:130.20px;top:309.15px;width:889.40px;height:20.93px;background:#f8f8f8;"></div>
<div class="b" style="left:130.20px;top:330.08px;width:889.40px;height:20.93px;background:#ffffff;"></div>
<div class="b" style="left:130.20px;top:351.01px;width:889.40px;height:20.93px;background:#f8f8f8;"></div>
<div class="b" style="left:130.20px;top:371.94px;width:889.40px;height:20.93px;background:#ffffff;"></div>
<div class="b" style="left:130.20px;top:392.87px;width:889.40px;height:20.93px;background:#f8f8f8;"></div>
<div class="b" style="left:130.20px;top:413.80px;width:889.40px;height:20.93px;background:#ffffff;"></div>
<div class="b" style="left:130.20px;top:434.73px;width:889.40px;height:20.93px;background:#f8f8f8;"></div>
<div class="b" style="left:130.20px;top:455.66px;width:889.40px;height:20.93px;background:#ffffff;"></div>
<div class="b" style="left:130.20px;top:476.59px;width:889.40px;height:20.93px;background:#f8f8f8;"></div>
<div class="b" style="left:130.20px;top:497.52px;width:889.40px;height:20.93px;background:#ffffff;"></div>
<div class="b" style="left:130.20px;top:518.45px;width:889.40px;height:20.93px;background:#f8f8f8;"></div>
<div class="b" style="left:130.20px;top:539.38px;width:889.40px;height:20.93px;background:#ffffff;"></div>
<div class="b" style="left:130.20px;top:560.31px;width:889.40px;height:20.93px;background:#f8f8f8;"></div>
<div class="b" style="left:130.20px;top:204.00px;width:889.90px;height:1.00px;background:#dcdcdc;"></div>
<div class="b" style="left:130.20px;top:224.93px;width:889.90px;height:1.00px;background:#dcdcdc;"></div>
<div class="b" style="left:130.20px;top:245.86px;width:889.90px;height:1.00px;background:#dcdcdc;"></div>
<div class="b" style="left:130.20px;top:266.79px;width:889.90px;height:1.00px;background:#dcdcdc;"></div>
<div class="b" style="left:130.20px;top:287.72px;width:889.90px;height:1.00px;background:#dcdcdc;"></div>
<div class="b" style="left:130.20px;top:308.65px;width:889.90px;height:1.00px;background:#dcdcdc;"></div>
<div class="b" style="left:130.20px;top:329.58px;width:889.90px;height:1.00px;background:#dcdcdc;"></div>
<div class="b" style="left:130.20px;top:350.51px;width:889.90px;height:1.00px;background:#dcdcdc;"></div>
<div class="b" style="left:130.20px;top:371.44px;width:889.90px;height:1.00px;background:#dcdcdc;"></div>
<div class="b" style="left:130.20px;top:392.37px;width:889.90px;height:1.00px;background:#dcdcdc;"></div>
<div class="b" style="left:130.20px;top:413.30px;width:889.90px;height:1.00px;background:#dcdcdc;"></div>
<div class="b" style="left:130.20px;top:434.23px;width:889.90px;height:1.00px;background:#dcdcdc;"></div>
<div class="b" style="left:130.20px;top:455.16px;width:889.90px;height:1.00px;background:#dcdcdc;"></div>
<div class="b" style="left:130.20px;top:476.09px;width:889.90px;height:1.00px;background:#dcdcdc;"></div>
<div class="b" style="left:130.20px;top:497.02px;width:889.90px;height:1.00px;background:#dcdcdc;"></div>
<div class="b" style="left:130.20px;top:517.95px;width:889.90px;height:1.00px;background:#dcdcdc;"></div>
<div class="b" style="left:130.20px;top:538.88px;width:889.90px;height:1.00px;background:#dcdcdc;"></div>
<div class="b" style="left:130.20px;top:559.81px;width:889.90px;height:1.00px;background:#dcdcdc;"></div>
<div class="b" style="left:130.20px;top:580.74px;width:889.90px;height:1.00px;background:#dcdcdc;"></div>
<div class="b" style="left:130.20px;top:183.80px;width:889.90px;height:1.00px;background:#dcdcdc;"></div>
<div class="b" style="left:129.70px;top:183.80px;width:1.00px;height:397.44px;background:#dcdcdc;"></div>
<div class="b" style="left:153.90px;top:183.80px;width:1.00px;height:397.44px;background:#dcdcdc;"></div>
<div class="b" style="left:223.90px;top:183.80px;width:1.00px;height:397.44px;background:#dcdcdc;"></div>
<div class="b" style="left:307.80px;top:183.80px;width:1.00px;height:397.44px;background:#dcdcdc;"></div>
<div class="b" style="left:376.90px;top:183.80px;width:1.00px;height:397.44px;background:#dcdcdc;"></div>
<div class="b" style="left:419.20px;top:183.80px;width:1.00px;height:397.44px;background:#dcdcdc;"></div>
<div class="b" style="left:461.00px;top:183.80px;width:1.00px;height:397.44px;background:#dcdcdc;"></div>
<div class="b" style="left:530.90px;top:183.80px;width:1.00px;height:397.44px;background:#dcdcdc;"></div>
<div class="b" style="left:579.90px;top:183.80px;width:1.00px;height:397.44px;background:#dcdcdc;"></div>
<div class="b" style="left:648.80px;top:183.80px;width:1.00px;height:397.44px;background:#dcdcdc;"></div>
<div class="b" style="left:698.10px;top:183.80px;width:1.00px;height:397.44px;background:#dcdcdc;"></div>
<div class="b" style="left:760.90px;top:183.80px;width:1.00px;height:397.44px;background:#dcdcdc;"></div>
<div class="b" style="left:830.80px;top:183.80px;width:1.00px;height:397.44px;background:#dcdcdc;"></div>
<div class="b" style="left:879.60px;top:183.80px;width:1.00px;height:397.44px;background:#dcdcdc;"></div>
<div class="b" style="left:949.00px;top:183.80px;width:1.00px;height:397.44px;background:#dcdcdc;"></div>
<div class="b" style="left:1019.10px;top:183.80px;width:1.00px;height:397.44px;background:#dcdcdc;"></div>
<span class="t" style="left:130.20px;top:187.50px;width:24.20px;text-align:center;font-size:8.9px;font-weight:700;line-height:14px;color:#333;font-kerning:none;">序号</span>
<span class="t" style="left:154.40px;top:187.50px;width:70.00px;text-align:center;font-size:8.9px;font-weight:700;line-height:14px;color:#333;font-kerning:none;">项目</span>
<span class="t" style="left:224.40px;top:187.50px;width:83.90px;text-align:center;font-size:8.9px;font-weight:700;line-height:14px;color:#333;font-kerning:none;"><span class="r" style="font-weight:400;font-size:8.6px;line-height:8px;position:relative;top:-0.6px;margin-right:1.6px;">*</span>存货名称</span>
<span class="t" style="left:308.30px;top:187.50px;width:69.10px;text-align:center;font-size:8.9px;font-weight:700;line-height:14px;color:#333;font-kerning:none;">规格型号</span>
<span class="t" style="left:377.40px;top:187.50px;width:42.30px;text-align:center;font-size:8.9px;font-weight:700;line-height:14px;color:#333;font-kerning:none;"><span class="r" style="font-weight:400;font-size:8.6px;line-height:8px;position:relative;top:-0.6px;margin-right:1.6px;">*</span>销售单位</span>
<span class="t" style="left:419.70px;top:187.50px;width:41.80px;text-align:center;font-size:8.9px;font-weight:700;line-height:14px;color:#333;font-kerning:none;"><span class="r" style="font-weight:400;font-size:8.6px;line-height:8px;position:relative;top:-0.6px;margin-right:1.6px;">*</span>数量</span>
<span class="t" style="left:461.50px;top:187.50px;width:69.90px;text-align:center;font-size:8.9px;font-weight:700;line-height:14px;color:#333;font-kerning:none;">最新含税售价</span>
<span class="t" style="left:531.40px;top:187.50px;width:49.00px;text-align:center;font-size:8.9px;font-weight:700;line-height:14px;color:#333;font-kerning:none;"><span class="r" style="font-weight:400;font-size:8.6px;line-height:8px;position:relative;top:-0.6px;margin-right:1.6px;">*</span>单价</span>
<span class="t" style="left:580.40px;top:187.50px;width:68.90px;text-align:center;font-size:8.9px;font-weight:700;line-height:14px;color:#333;font-kerning:none;"><span class="r" style="font-weight:400;font-size:8.6px;line-height:8px;position:relative;top:-0.6px;margin-right:1.6px;">*</span>税率%</span>
<span class="t" style="left:649.30px;top:187.50px;width:49.30px;text-align:center;font-size:8.9px;font-weight:700;line-height:14px;color:#333;font-kerning:none;"><span class="r" style="font-weight:400;font-size:8.6px;line-height:8px;position:relative;top:-0.6px;margin-right:1.6px;">*</span>含税单价</span>
<span class="t" style="left:698.60px;top:187.50px;width:62.80px;text-align:center;font-size:8.9px;font-weight:700;line-height:14px;color:#333;font-kerning:none;"><span class="r" style="font-weight:400;font-size:8.6px;line-height:8px;position:relative;top:-0.6px;margin-right:1.6px;">*</span>金额</span>
<span class="t" style="left:761.40px;top:187.50px;width:69.90px;text-align:center;font-size:8.9px;font-weight:700;line-height:14px;color:#333;font-kerning:none;"><span class="r" style="font-weight:400;font-size:8.6px;line-height:8px;position:relative;top:-0.6px;margin-right:1.6px;">*</span>含税金额</span>
<span class="t" style="left:831.30px;top:187.50px;width:48.80px;text-align:center;font-size:8.9px;font-weight:700;line-height:14px;color:#333;font-kerning:none;">现存量</span>
<span class="t" style="left:880.10px;top:187.50px;width:69.40px;text-align:center;font-size:8.9px;font-weight:700;line-height:14px;color:#333;font-kerning:none;">现存量说明</span>
<span class="t" style="left:949.50px;top:187.50px;width:70.10px;text-align:center;font-size:8.9px;font-weight:700;line-height:14px;color:#333;font-kerning:none;">备注</span>
<span class="t" style="left:130.20px;top:208.16px;width:24.20px;text-align:center;font-size:8.9px;line-height:14px;color:#333;">1</span>
<span class="t " style="left:228.40px;top:208.47px;font-size:8.90px;line-height:14px;color:#222;">鼠链</span>
<span class="t " style="left:381.40px;top:208.47px;font-size:8.90px;line-height:14px;color:#222;">条</span>
<span class="t " style="right:883.10px;top:208.17px;font-size:8.35px;line-height:14px;color:#3a3a3a;letter-spacing:0.2px;">1.00</span>
<span class="t " style="right:813.20px;top:208.17px;font-size:8.35px;line-height:14px;color:#3a3a3a;letter-spacing:0.2px;">1.00</span>
<span class="t " style="right:764.20px;top:208.17px;font-size:8.35px;line-height:14px;color:#3a3a3a;letter-spacing:0.2px;">1.00</span>
<span class="t " style="right:695.30px;top:208.17px;font-size:8.35px;line-height:14px;color:#3a3a3a;letter-spacing:0.2px;">0.00%</span>
<span class="t " style="right:646.00px;top:208.17px;font-size:8.35px;line-height:14px;color:#3a3a3a;letter-spacing:0.2px;">1.00</span>
<span class="t " style="right:583.20px;top:208.17px;font-size:8.35px;line-height:14px;color:#3a3a3a;letter-spacing:0.2px;">1.00</span>
<span class="t " style="right:513.30px;top:208.17px;font-size:8.35px;line-height:14px;color:#3a3a3a;letter-spacing:0.2px;">1.00</span>
<span class="t" style="left:130.20px;top:229.09px;width:24.20px;text-align:center;font-size:8.9px;line-height:14px;color:#333;">2</span>
<span class="t " style="left:228.40px;top:229.40px;font-size:8.90px;line-height:14px;color:#222;">鼠链</span>
<span class="t " style="left:381.40px;top:229.40px;font-size:8.90px;line-height:14px;color:#222;">条</span>
<span class="t " style="right:883.10px;top:229.10px;font-size:8.35px;line-height:14px;color:#3a3a3a;letter-spacing:0.2px;">1.00</span>
<span class="t " style="right:813.20px;top:229.10px;font-size:8.35px;line-height:14px;color:#3a3a3a;letter-spacing:0.2px;">1.00</span>
<span class="t " style="right:764.20px;top:229.10px;font-size:8.35px;line-height:14px;color:#3a3a3a;letter-spacing:0.2px;">1.00</span>
<span class="t " style="right:695.30px;top:229.10px;font-size:8.35px;line-height:14px;color:#3a3a3a;letter-spacing:0.2px;">0.00%</span>
<span class="t " style="right:646.00px;top:229.10px;font-size:8.35px;line-height:14px;color:#3a3a3a;letter-spacing:0.2px;">1.00</span>
<span class="t " style="right:583.20px;top:229.10px;font-size:8.35px;line-height:14px;color:#3a3a3a;letter-spacing:0.2px;">1.00</span>
<span class="t " style="right:513.30px;top:229.10px;font-size:8.35px;line-height:14px;color:#3a3a3a;letter-spacing:0.2px;">1.00</span>
<span class="t" style="left:130.20px;top:250.02px;width:24.20px;text-align:center;font-size:8.9px;line-height:14px;color:#333;">3</span>
<span class="t " style="left:228.40px;top:250.32px;font-size:8.90px;line-height:14px;color:#222;">鼠链</span>
<span class="t " style="left:381.40px;top:250.32px;font-size:8.90px;line-height:14px;color:#222;">条</span>
<span class="t " style="right:883.10px;top:250.02px;font-size:8.35px;line-height:14px;color:#3a3a3a;letter-spacing:0.2px;">1.00</span>
<span class="t " style="right:813.20px;top:250.02px;font-size:8.35px;line-height:14px;color:#3a3a3a;letter-spacing:0.2px;">1.00</span>
<span class="t " style="right:764.20px;top:250.02px;font-size:8.35px;line-height:14px;color:#3a3a3a;letter-spacing:0.2px;">1.00</span>
<span class="t " style="right:695.30px;top:250.02px;font-size:8.35px;line-height:14px;color:#3a3a3a;letter-spacing:0.2px;">0.00%</span>
<span class="t " style="right:646.00px;top:250.02px;font-size:8.35px;line-height:14px;color:#3a3a3a;letter-spacing:0.2px;">1.00</span>
<span class="t " style="right:583.20px;top:250.02px;font-size:8.35px;line-height:14px;color:#3a3a3a;letter-spacing:0.2px;">1.00</span>
<span class="t " style="right:513.30px;top:250.02px;font-size:8.35px;line-height:14px;color:#3a3a3a;letter-spacing:0.2px;">1.00</span>
<span class="t" style="left:130.20px;top:270.95px;width:24.20px;text-align:center;font-size:8.9px;line-height:14px;color:#cfcfcf;">4</span>
<span class="t" style="left:130.20px;top:291.88px;width:24.20px;text-align:center;font-size:8.9px;line-height:14px;color:#cfcfcf;">5</span>
<span class="t" style="left:130.20px;top:312.81px;width:24.20px;text-align:center;font-size:8.9px;line-height:14px;color:#cfcfcf;">6</span>
<span class="t" style="left:130.20px;top:333.74px;width:24.20px;text-align:center;font-size:8.9px;line-height:14px;color:#cfcfcf;">7</span>
<span class="t" style="left:130.20px;top:354.67px;width:24.20px;text-align:center;font-size:8.9px;line-height:14px;color:#cfcfcf;">8</span>
<span class="t" style="left:130.20px;top:375.60px;width:24.20px;text-align:center;font-size:8.9px;line-height:14px;color:#cfcfcf;">9</span>
<span class="t" style="left:130.20px;top:396.53px;width:24.20px;text-align:center;font-size:8.9px;line-height:14px;color:#cfcfcf;">10</span>
<span class="t" style="left:130.20px;top:417.46px;width:24.20px;text-align:center;font-size:8.9px;line-height:14px;color:#cfcfcf;">11</span>
<span class="t" style="left:130.20px;top:438.39px;width:24.20px;text-align:center;font-size:8.9px;line-height:14px;color:#cfcfcf;">12</span>
<span class="t" style="left:130.20px;top:459.32px;width:24.20px;text-align:center;font-size:8.9px;line-height:14px;color:#cfcfcf;">13</span>
<span class="t" style="left:130.20px;top:480.25px;width:24.20px;text-align:center;font-size:8.9px;line-height:14px;color:#cfcfcf;">14</span>
<span class="t" style="left:130.20px;top:501.18px;width:24.20px;text-align:center;font-size:8.9px;line-height:14px;color:#cfcfcf;">15</span>
<span class="t" style="left:130.20px;top:522.12px;width:24.20px;text-align:center;font-size:8.9px;line-height:14px;color:#cfcfcf;">16</span>
<span class="t" style="left:130.20px;top:543.05px;width:24.20px;text-align:center;font-size:8.9px;line-height:14px;color:#cfcfcf;">17</span>
<span class="t" style="left:130.20px;top:563.98px;width:24.20px;text-align:center;font-size:8.9px;line-height:14px;color:#cfcfcf;">18</span>
<div class="b" style="left:155.00px;top:584.00px;width:865.10px;height:20.00px;background:#f1f1f1;border:1px solid #e2e2e2;"></div>
<div class="b" style="left:130.20px;top:598.40px;width:25.00px;height:5.60px;background:#f1f1f1;border:1px solid #e2e2e2;border-bottom:none;"></div>
<div class="b" style="left:131px;top:599.4px;width:24px;height:4.4px;overflow:hidden;"><span class="t" style="left:3.4px;top:0.9px;font-size:8.9px;font-weight:700;line-height:14px;color:#333;">合计</span></div>
<span class="t " style="left:176.80px;top:611.60px;font-size:8.97px;line-height:14px;color:#4a4a4a;">备注</span>
<div class="b" style="left:197.80px;top:624.60px;width:1046.80px;height:1.00px;background:#e2e2e2;"></div>
<span class="t " style="right:1143.50px;top:631.20px;font-size:8.97px;line-height:14px;color:#4a4a4a;">制单人</span>
<span class="t " style="left:199.80px;top:630.30px;font-size:8.35px;line-height:14px;color:#222;letter-spacing:0.2px;">001</span>
<div class="b" style="left:197.80px;top:646.00px;width:79.20px;height:1.00px;background:#dcdcdc;"></div>
<span class="t " style="right:990.01px;top:631.20px;font-size:8.97px;line-height:14px;color:#4a4a4a;">审核人</span>
<span class="t " style="left:353.29px;top:630.30px;font-size:8.35px;line-height:14px;color:#222;letter-spacing:0.2px;">001</span>
<div class="b" style="left:351.29px;top:646.00px;width:79.20px;height:1.00px;background:#dcdcdc;"></div>
<span class="t " style="right:836.52px;top:631.20px;font-size:8.97px;line-height:14px;color:#4a4a4a;">审核日期</span>
<span class="t " style="left:506.78px;top:630.30px;font-size:8.35px;line-height:14px;color:#222;letter-spacing:0.2px;">2018-12-24</span>
<div class="b" style="left:504.78px;top:646.00px;width:79.20px;height:1.00px;background:#dcdcdc;"></div>
<span class="t " style="right:683.53px;top:631.20px;font-size:8.97px;line-height:14px;color:#4a4a4a;">打印次数</span>
<span class="t " style="left:660.27px;top:630.30px;font-size:8.35px;line-height:14px;color:#222;letter-spacing:0.2px;">0</span>
<div class="b" style="left:658.27px;top:646.00px;width:79.20px;height:1.00px;background:#dcdcdc;"></div>
<span class="t " style="right:530.04px;top:631.20px;font-size:8.97px;line-height:14px;color:#4a4a4a;">变更人</span>
<div class="b" style="left:811.76px;top:646.00px;width:79.20px;height:1.00px;background:#dcdcdc;"></div>
<span class="t " style="right:376.55px;top:631.20px;font-size:8.97px;line-height:14px;color:#4a4a4a;">变更日期</span>
<div class="b" style="left:965.25px;top:646.00px;width:79.20px;height:1.00px;background:#dcdcdc;"></div>
<div class="b" style="left:111.60px;top:647.00px;width:1226.40px;height:5.00px;background:#eaf1fb;"></div>
<div class="b" style="left:0.00px;top:637.20px;width:445.60px;height:14.80px;background:#dedede;border-top:1px solid #cfcfcf;border-right:1px solid #cfcfcf;border-top-right-radius:3.5px;"></div>
<span class="t " style="left:2.20px;top:638.00px;font-size:8.90px;line-height:14px;color:#555;">www.chanjet.com</span>
<svg class="b" style="left:1308px;top:532px" width="30" height="52" viewBox="0 0 30 52"><circle cx="6.8" cy="32.2" r="4.3" fill="#e8a02a" stroke="#a8621a" stroke-width="0.9"/><circle cx="7.3" cy="32.2" r="2" fill="#fff6ea"/><path d="M26.6 37 C25 43 27.5 46.6 32 46.6" fill="none" stroke="#a8621a" stroke-width="4.8" stroke-linecap="round"/><path d="M26.6 37 C25 43 27.5 46.6 32 46.6" fill="none" stroke="#e8a02a" stroke-width="3.2" stroke-linecap="round"/><ellipse cx="27.4" cy="20.8" rx="19.4" ry="16.4" fill="#e8a02a" stroke="#a8621a" stroke-width="0.9"/><path d="M28 9.6 C21 6.4 12 10.6 12.4 20.4 C12.8 31 19.4 35.2 30.4 35.2 V9.6 Z" fill="#fdf1e6"/><path d="M15.6 3.4 L16.6 5.6 M18.2 2.6 L18.6 5" stroke="#a8621a" stroke-width="0.9" fill="none"/><ellipse cx="18.6" cy="23.4" rx="1.7" ry="1.4" fill="#4a2e14"/><ellipse cx="18" cy="30.2" rx="2.8" ry="1.8" fill="#f4a19c"/><path d="M25 22.8 L26.8 24 M25.4 27.6 C26.6 28.4 28 28 29.4 26.8" stroke="#4a2e14" stroke-width="0.9" fill="none" stroke-linecap="round"/><path d="M19.4 18.2 L22.2 16.8" stroke="#d9b896" stroke-width="0.7"/></svg>
</body></html>
